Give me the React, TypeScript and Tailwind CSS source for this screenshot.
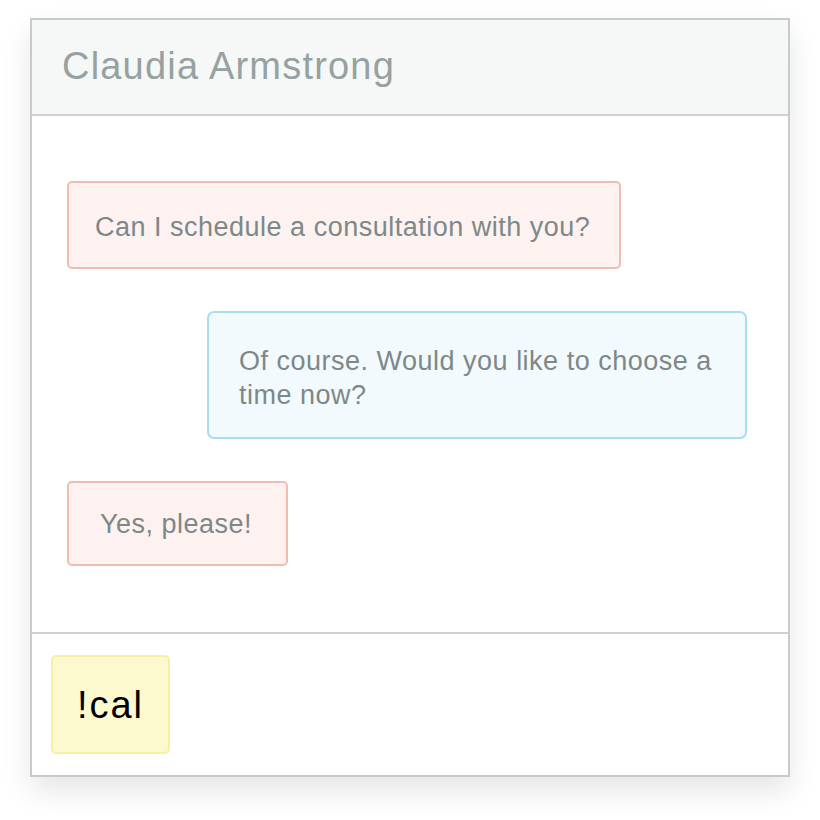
export default function App() {
  return (
    <div
      className="w-[820px] h-[820px] bg-white pt-[18px] pl-[30px]"
      style={{ fontFamily: '"Liberation Sans", Arial, sans-serif' }}
    >
      <div className="w-[760px] h-[759px] border-2 border-[#c6cccc] bg-white flex flex-col shadow-[0_14px_28px_rgba(0,0,0,0.10)]">
        <div className="h-[96px] shrink-0 bg-[#f6f8f7] border-b-2 border-[#cdd2d2] flex items-center pl-[30px] pb-[2px]">
          <span className="text-[38px] tracking-[1.2px] text-[#96a1a1] leading-none">Claudia Armstrong</span>
        </div>
        <div className="h-[516px] shrink-0 flex flex-col pt-[65px] gap-[42px]">
          <div className="self-start ml-[35px] w-[554px] h-[88px] border-2 border-[#f1bdb0] bg-[#fdf2f0] rounded-[5px] flex items-center pl-[26px] pt-[3px]">
            <span className="text-[27px] tracking-[0.5px] text-[#7d8888] leading-[34px]">Can I schedule a consultation with you?</span>
          </div>
          <div className="self-end mr-[41px] w-[540px] h-[128px] border-2 border-[#a7dff1] bg-[#f3fafd] rounded-[7px] flex items-center pl-[30px] pr-[20px] pt-[5px]">
            <span className="text-[27px] tracking-[0.5px] text-[#7d8888] leading-[34px]">Of course. Would you like to choose a time now?</span>
          </div>
          <div className="self-start ml-[35px] w-[221px] h-[85px] border-2 border-[#f1bdb0] bg-[#fdf2f0] rounded-[5px] flex items-center pl-[31px]">
            <span className="text-[27px] tracking-[0.5px] text-[#7d8888] leading-[34px]">Yes, please!</span>
          </div>
        </div>
        <div className="border-t-2 border-[#cdd2d2] flex-1 pl-[19px] pt-[21px]">
          <div className="w-[119px] h-[99px] bg-[#fcf9cf] border-2 border-[#f7efa3] rounded-[5px] flex items-center justify-center">
            <span className="text-[38px] tracking-[2px] text-black leading-none">!cal</span>
          </div>
        </div>
      </div>
    </div>
  );
}
